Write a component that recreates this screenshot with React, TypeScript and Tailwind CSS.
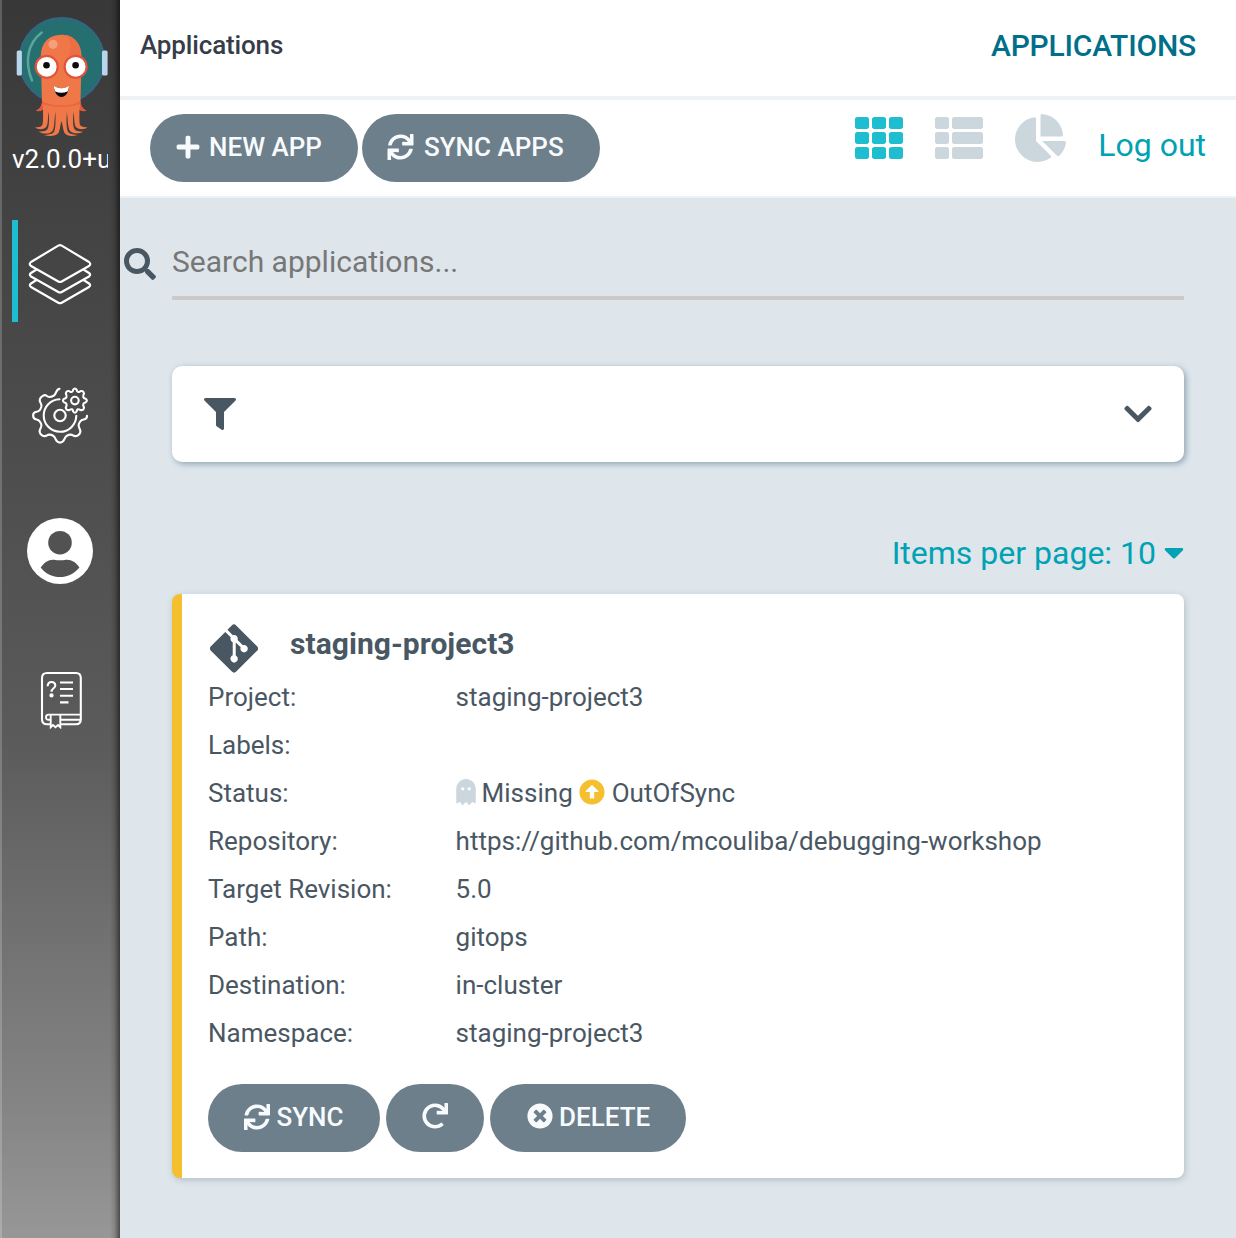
import React from 'react';
import {
  FaArrowAltCircleUp,
  FaCaretDown,
  FaChartPie,
  FaChevronDown,
  FaFilter,
  FaGhost,
  FaGitAlt,
  FaPlus,
  FaRedo,
  FaSearch,
  FaSync,
  FaTh,
  FaThList,
  FaTimesCircle,
} from 'react-icons/fa';

function Logo() {
  return (
    <svg className="block h-[142px] w-[120px] shrink-0" viewBox="0 0 120 142" fill="none">
      <circle cx="61.7" cy="60.3" r="42.3" fill="#256f70" stroke="#346684" strokeWidth="2" />
      <path d="M41.7 32.5C28 43 24 61 32 80.500" stroke="#5ba39d" strokeWidth="2.600" strokeLinecap="round" />
      <rect x="16.700" y="50.500" width="5.200" height="25" rx="1.600" fill="#b9d5ec" />
      <rect x="102" y="50.500" width="5.600" height="25" rx="1.600" fill="#b9d5ec" />
      <path
        d="M40.800 56C40.800 43 49 34.800 61 34.800S81.500 43 81.500 56L80.500 103C81.500 107 83.500 109.500 86.500 110.500C83.500 112 81 111 79.500 109.500C79.500 117 79 124 80.500 125.500C82 127.200 85 127.300 87.500 127.500C84 130 78 129.800 75.500 126.500C74 123 74.500 117 73.500 112C73 119 72.500 127 75 129.800C76.500 131.500 80.500 131.500 83 131.700C79 134 73 134 70 131C67.500 127 68 119 66.800 112C66.500 120 66 129 68.500 132.500C70.500 134.500 74.500 134.500 77.700 135C72.500 136.700 67 136.500 64.500 133C63 130 62.800 125 61.500 121C60.200 125 60 130 58.500 133C56 136.500 49 136.700 44 135C47.500 134.500 51.500 134.500 53.500 132.500C56 129 55.500 120 55.500 112C54 119 55 127 52.500 131C50 134 44 134.500 38.500 131.700C42 131.500 45.500 131.500 47 129.800C49.500 127 49 119 49 112C47.500 117 48.500 123 46.500 126.500C44.500 129.800 38 130 35 127.500C38 127.300 40.500 127.200 42 125.500C43.500 123 43 117 43 109.500C41 111 38.500 112 36 110.500C39 109.500 41 107 42 103Z"
        fill="#ef7748"
      />
      <path d="M65 35C72 40 72 50 68 56L80 58C82 47 76 36 65 35Z" fill="#ed6d44" />
      <path d="M42 101C53 107 70 107 80.500 101L80.500 104C69 108 53 108 42 104Z" fill="#e96740" />
      <path d="M42 102C42 106 39 109.500 36 110.500C39 112 41.500 110.500 43 109Z" fill="#e5543f" />
      <path d="M80.500 102C80.500 106 83.500 109.500 86.500 110.500C83.500 112 81 110.500 79.700 109Z" fill="#e5543f" />
      <circle cx="53" cy="44.300" r="4.600" fill="#f4a07c" />
      <circle cx="46.700" cy="66.800" r="11" fill="#fff" stroke="#e2533b" strokeWidth="2.200" />
      <circle cx="75.600" cy="66.800" r="11" fill="#fff" stroke="#e2533b" strokeWidth="2.200" />
      <circle cx="46.500" cy="65.200" r="3.300" fill="#0b0b0b" />
      <circle cx="75.600" cy="65.200" r="3.300" fill="#0b0b0b" />
      <path d="M53.700 85.500C58 89 65 89 69 85.500C68.700 92 66 97 61.500 97S54.300 92 53.700 85.500Z" fill="#0b0b0b" />
      <path d="M53.700 85.500C58 89 65 89 69 85.500C68.800 88 68.300 90 67.500 91.500C63.500 93.300 59 93.300 55.300 91.500C54.500 90 53.900 88 53.700 85.500Z" fill="#fff" />
    </svg>
  );
}

function LayersIcon() {
  return (
    <svg className="block h-[64px] w-[64px]" viewBox="0 0 64 64" fill="none" stroke="#fff" strokeWidth="2.200" strokeLinejoin="round">
      <path d="M30.300 3.600Q32 2.600 33.700 3.600L61 20Q63.500 22 61 24L33.700 39.500Q32 40.500 30.300 39.500L3 24Q.500 22 3 20Z" />
      <path d="M8.500 27.500L3 31Q.700 32.700 3 34.500L30.300 50Q32 51 33.700 50L61 34.500Q63.300 32.700 61 31L55.500 27.500" />
      <path d="M8.500 38L3 41.500Q.700 43.200 3 45L30.300 60.700Q32 61.700 33.700 60.700L61 45Q63.300 43.200 61 41.500L55.500 38" />
    </svg>
  );
}

function GearsIcon() {
  return (
    <svg className="block h-[60px] w-[60px]" viewBox="0 0 60 60" fill="none" stroke="#fff" strokeWidth="2.100" strokeLinecap="round" strokeLinejoin="round">
      <path d="M29.500 2.900C26 3 26.300 8 24 9.500C21.500 11 18.500 11.500 16.500 9.800C14 7.700 9 12 9.800 15C10.300 17 12 18 11.300 21C10.500 23.500 9.300 25.500 6.500 25.800C2 26.200 2 33 6.500 33.500C9.500 34 10.500 36 11.300 38.500C12 41 10.200 42.500 9.700 44.500C9 48 13.500 51.500 16.800 49.500C19 48 21.500 48.800 23.500 50C26 51.500 25.300 56.600 30 56.600S34 51.500 36.500 50C38.500 48.800 41 48 43.200 49.500C46.500 51.500 51 48 50.300 44.500C49.800 42.500 48 41 48.700 38.500C49.500 36 50.500 34 53.500 33.500C56 33 57.200 32 57 29.800" />
      <path d="M29.500 13.200A16.300 16.300 0 1 0 46.300 29.800" />
      <circle cx="30" cy="29.500" r="5.700" />
      <circle cx="44.900" cy="14.600" r="3.800" />
      <path d="M43.200 3.700Q44.900 1.300 46.600 3.700C46.900 6.200 48.300 6.500 50.200 5.300Q53.600 4.200 54 7.600C52.400 10.700 53.200 12.200 55.500 12.700Q58.200 14.600 55.500 16.500C53.200 17 52.400 18.500 54 21.600Q53.600 25 50.200 23.900C48.300 22.700 46.900 23 46.600 25.500Q44.900 27.900 43.200 25.500C42.900 23 41.500 22.700 39.600 23.900Q36.200 25 35.800 21.600C37.400 18.500 36.600 17 34.300 16.500Q31.600 14.600 34.300 12.700C36.600 12.200 37.400 10.700 35.800 7.600Q36.200 4.200 39.600 5.300C41.500 6.500 42.900 6.200 43.200 3.700Z" />
    </svg>
  );
}

function UserIcon() {
  return (
    <svg className="block h-[66px] w-[66px]" viewBox="0 0 66 66">
      <circle cx="33" cy="33" r="33" fill="#fff" />
      <circle cx="33" cy="24.700" r="11.800" fill="#525252" />
      <path d="M13.700 49.400C17.500 44 22 41.200 27 41.700C31 42.500 35 42.500 39 41.700C44 41.200 49 44 52.400 49.400C47 56 40 59 33 59S18.500 56 13.700 49.400Z" fill="#535353" />
    </svg>
  );
}

function DocsIcon() {
  return (
    <svg className="block h-[58px] w-[44px]" viewBox="0 0 44 58" fill="none" stroke="#fff" strokeWidth="2.100">
      <path d="M10.500 53.200H7Q2 53.200 2 48.200V7Q2 2 7 2H36Q40.800 2 40.800 7V48.200Q40.800 53.200 36 53.200H20.500" />
      <path d="M40.800 43.600H8.500Q6 43.600 6 46.200T8.500 48.800H10.500M20.500 48.800H40" strokeWidth="1.900" />
      <path d="M10.700 44V56.200L13 54L15.500 56.200L18 54L20.300 56.200V44" strokeWidth="1.900" />
      <path d="M20 11.500H33M20 18H33M20 24.700H33M20 31.400H28.500" />
      <path d="M7.600 15.300C8 9.500 15.300 10 15.300 14.500C15.300 17.500 11.500 17 11.500 20.800" />
      <circle cx="11.500" cy="24.400" r="1.100" fill="#fff" />
    </svg>
  );
}

function Sidebar() {
  return (
    <aside className="relative flex h-full w-[120px] shrink-0 flex-col items-center border-l-2 border-white/20 bg-[linear-gradient(to_bottom,#383838_0%,#434343_18%,#505050_42%,#5b5b5b_60%,#848484_89%,#979797_100%)]">
      <div className="-ml-[2px] flex w-[120px] flex-col items-center">
        <Logo />
        <div className="h-[34px] w-[96px] overflow-hidden text-[26px] leading-[34px] whitespace-nowrap text-white">v2.0.0+unknown</div>
        <div className="mt-[44px] flex h-[102px] w-[96px] items-center justify-center border-l-[6px] border-[#1fbdd0] pt-[5px] pr-[6px]">
          <LayersIcon />
        </div>
        <div className="mt-[64px]">
          <GearsIcon />
        </div>
        <div className="mt-[71.5px]">
          <UserIcon />
        </div>
        <div className="mt-[87.5px] ml-[3px]">
          <DocsIcon />
        </div>
      </div>
      <div className="absolute inset-y-0 right-0 w-[10px] bg-[linear-gradient(to_right,transparent,rgba(0,0,0,0.120)_45%,rgba(0,0,0,0.500))]" />
    </aside>
  );
}

const button =
  'flex h-[68px] items-center rounded-[34px] bg-[#6d7f8b] text-[26px] leading-none font-medium text-[#f8fbfd] whitespace-nowrap';

const rows: [string, React.ReactNode][] = [
  ['Project:', 'staging-project3'],
  ['Labels:', ''],
  [
    'Status:',
    <span className="flex items-center">
      <FaGhost className="mr-[6px] -mt-[2px] h-[26px] w-[20px] text-[#ccd6dd]" />
      Missing
      <FaArrowAltCircleUp className="mr-[6.500px] -mt-[2px] ml-[6.500px] h-[26px] w-[26px] text-[#f4c030]" />
      OutOfSync
    </span>,
  ],
  ['Repository:', 'https://github.com/mcouliba/debugging-workshop'],
  ['Target Revision:', '5.0'],
  ['Path:', 'gitops'],
  ['Destination:', 'in-cluster'],
  ['Namespace:', 'staging-project3'],
];

export default function App() {
  return (
    <div className="flex h-[1238px] w-[1236px] overflow-hidden bg-[#dee6ec] font-['Roboto',sans-serif] text-[#495763]">
      <Sidebar />
      <main className="flex min-w-0 flex-1 flex-col">
        <header className="flex h-[100px] items-center justify-between border-b-4 border-[#eef2f5] bg-white pr-10 pb-[5px] pl-5">
          <span className="text-[26px] font-medium tracking-[-0.15px] text-[#363c4a]">Applications</span>
          <span className="text-[30px] font-medium tracking-[-0.2px] text-[#006f8a]">APPLICATIONS</span>
        </header>
        <div className="flex h-[98px] items-center border-b-2 border-[#eef2f5] bg-white pr-[30px] pl-[30px]">
          <button className={`${button} w-[208px] pb-[2px] pl-[24px]`}>
            <FaPlus className="mr-[8px] ml-[1px] h-[26px] w-[26px]" />
            NEW APP
          </button>
          <button className={`${button} ml-1 w-[238px] pb-[3px] pl-[25px]`}>
            <FaSync className="mr-[10px] h-[26px] w-[27px]" />
            SYNC APPS
          </button>
          <div className="ml-auto flex items-center">
            <FaTh className="-mt-[20px] h-12 w-12 text-[#1fbdd0]" />
            <FaThList className="-mt-[20px] ml-8 h-12 w-12 text-[#ccd6dd]" />
            <FaChartPie className="-mt-[20px] ml-8 h-12 w-[51px] text-[#ccd6dd]" />
            <a className="-mt-[7px] ml-8 text-[32px] text-[#00a2b3]">Log out</a>
          </div>
        </div>
        <div className="flex h-[102px] pr-[52px] pl-1">
          <FaSearch className="mt-[50px] h-8 w-8 shrink-0" />
          <div className="ml-4 flex-1 border-b-4 border-[#cacaca] pt-[43px] text-[30px] leading-[42px] text-[#777]">Search applications...</div>
        </div>
        <section className="mt-[66px] mr-[52px] ml-[52px] flex h-24 items-center justify-between rounded-[10px] bg-white px-8 shadow-[2px_2px_6px_#8fa4b1]">
          <FaFilter className="h-8 w-8" />
          <FaChevronDown className="h-8 w-7" />
        </section>
        <div className="mt-[66px] mr-[52px] flex h-[50px] items-center justify-end text-[32px] text-[#00a2b3]">
          Items per page: 10
          <FaCaretDown className="-mt-[2px] ml-2 h-8 w-5" />
        </div>
        <article className="mt-4 mr-[52px] ml-[52px] h-[584px] rounded-lg border-l-[10px] border-[#f4c030] bg-white pl-[26px] shadow-[1px_2px_6px_rgba(100,120,120,0.350)]">
          <div className="flex h-[79px] pt-[26px]">
            <FaGitAlt className="mt-[0.5px] ml-[2px] h-[55px] w-[48px]" />
            <h2 className="ml-8 text-[30px] leading-[48px] font-bold tracking-[0.05px]">staging-project3</h2>
          </div>
          {rows.map(([label, value]) => (
            <div key={label} className="flex h-12 items-center text-[26px] leading-[48px]">
              <div className="w-[247.600px] shrink-0">{label}</div>
              <div>{value}</div>
            </div>
          ))}
          <div className="mt-[27px] flex gap-[6px]">
            <button className={`${button} w-[172px] pb-[3px] pl-[36px]`}>
              <FaSync className="mr-[6.500px] h-[26px] w-[26px]" />
              SYNC
            </button>
            <button className={`${button} w-[98px] justify-center pb-[4px]`}>
              <FaRedo className="h-[26px] w-[26px]" />
            </button>
            <button className={`${button} w-[196px] pb-[3px] pl-[36px]`}>
              <FaTimesCircle className="mr-[6.500px] ml-[0.5px] -mt-[1px] h-[26px] w-[26px]" />
              DELETE
            </button>
          </div>
        </article>
      </main>
    </div>
  );
}
